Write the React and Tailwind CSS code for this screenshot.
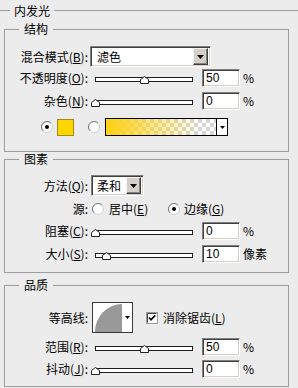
import React from "react";

function Tri() {
  return (
    <svg width="7" height="4" viewBox="0 0 7 4" className="shrink-0">
      <polygon points="0,0 7,0 3.5,4" fill="#000" />
    </svg>
  );
}

function Radio({ checked }) {
  return (
    <svg width="12" height="12" viewBox="0 0 12 12" className="shrink-0">
      <circle cx="6" cy="6" r="5.5" fill="#fff" stroke="#cfcfcf" />
      <path d="M2.1 9.9A5.5 5.5 0 0 1 9.9 2.1" fill="none" stroke="#7a7a7a" />
      {checked && <circle cx="6" cy="6" r="2" fill="#000" />}
    </svg>
  );
}

function Check() {
  return (
    <svg width="12" height="12" viewBox="0 0 12 12" className="shrink-0">
      <rect x="0.5" y="0.5" width="11" height="11" fill="#fff" stroke="#9a9a9a" />
      <path d="M1.5 10.5V1.5H10.5" fill="none" stroke="#404040" />
      <path d="M3 5.5L5 7.8L9.2 3.4" fill="none" stroke="#000" strokeWidth="1.7" />
    </svg>
  );
}

function U({ children }) {
  return <span className="underline underline-offset-[1px]">{children}</span>;
}

function Label({ children }) {
  return (
    <div className="w-[83px] shrink-0 whitespace-nowrap text-right leading-[12px]">
      {children}
    </div>
  );
}

function Slider({ pos }) {
  return (
    <div className="relative ml-[2px] h-[18px] w-[108px] shrink-0">
      <div className="ml-[5px] mt-[8px] h-[5px] w-[98px] border border-[#1e1e1e] bg-white" />
      <svg
        className="absolute top-[7px]"
        style={{ left: 1 + pos }}
        width="9"
        height="8"
        viewBox="0 0 9 8"
      >
        <polygon points="0.5,7.5 0.5,3.5 4.5,0.5 8.5,3.5 8.5,7.5" fill="#fff" stroke="#222" />
      </svg>
    </div>
  );
}

function NumInput({ value }) {
  return (
    <div className="ml-[4px] h-[18px] w-[38px] shrink-0 border border-t-[#808080] border-l-[#808080] border-b-white border-r-white bg-white pl-[3px] font-['Liberation_Sans',sans-serif] text-[12px] leading-[16px] shadow-[inset_1px_1px_0_#404040,inset_-1px_-1px_0_#d4d0c8]">
      {value}
    </div>
  );
}

function DropBtn() {
  return (
    <div className="flex h-[17px] w-[15px] shrink-0 items-center justify-center border border-t-[#f4f4f4] border-l-[#f4f4f4] border-b-[#404040] border-r-[#404040] bg-[#d4d0c8] shadow-[inset_-1px_-1px_0_#808080]">
      <Tri />
    </div>
  );
}

function SliderRow({ label, pos, value, unit, className }) {
  return (
    <div className={`flex h-[18px] items-center ${className}`}>
      <Label>{label}</Label>
      <Slider pos={pos} />
      <NumInput value={value} />
      <span className="ml-[3px] whitespace-nowrap leading-[12px]">{unit}</span>
    </div>
  );
}

function GroupBox({ title, className, children }) {
  return (
    <div className={`relative ml-[4px] flex w-[285px] flex-col border border-[#9d9d9d] ${className}`}>
      <span className="absolute left-[14px] top-[-7px] bg-[#ececec] px-[5px] leading-[12px]">
        {title}
      </span>
      {children}
    </div>
  );
}

export default function App() {
  return (
    <div className="h-[388px] w-[298px] overflow-hidden bg-[#ececec] font-['Noto_Sans_CJK_SC','Noto_Sans',sans-serif] text-[12px] text-black">
      <div className="flex h-[21px] items-center">
        <div className="h-px w-[10px] bg-[#9d9d9d]" />
        <span className="px-[4px] leading-[12px]">内发光</span>
        <div className="h-px flex-1 bg-[#9d9d9d]" />
      </div>

      <GroupBox title="结构" className="mt-[8px] h-[123px]">
        <div className="mt-[16px] flex h-[21px] items-center">
          <Label>
            混合模式(<U>B</U>):
          </Label>
          <div className="ml-[2px] flex h-[21px] w-[121px] items-center border border-t-[#808080] border-l-[#808080] border-b-white border-r-white bg-white p-[1px] pr-[2px] shadow-[inset_1px_1px_0_#404040,inset_-1px_-1px_0_#d4d0c8]">
            <span className="flex-1 pl-[5px] leading-[12px]">滤色</span>
            <DropBtn />
          </div>
        </div>
        <SliderRow
          className="mt-[2px]"
          label={<>不透明度(<U>O</U>):</>}
          pos={49}
          value="50"
          unit="%"
        />
        <SliderRow
          className="mt-[5px]"
          label={<>杂色(<U>N</U>):</>}
          pos={0}
          value="0"
          unit="%"
        />
        <div className="ml-[36px] mt-[8px] flex h-[18px] items-center">
          <Radio checked />
          <div className="ml-[4px] h-[17px] w-[17px] border border-[#a08a1c] bg-[#ffd500]" />
          <div className="ml-[14px]">
            <Radio />
          </div>
          <div className="ml-[5px] flex h-[18px] w-[123px] border border-black bg-white">
            <div className="h-full flex-1 bg-[image:repeating-conic-gradient(#d6d6d6_0%_25%,#ffffff_0%_50%)] bg-[length:8px_8px]">
              <div className="h-full w-full bg-linear-to-r from-[#ffd21a] from-5% to-[#ffd21a00] to-85%" />
            </div>
            <div className="flex w-[11px] items-center justify-center border-l border-black">
              <svg width="5" height="3" viewBox="0 0 5 3">
                <polygon points="0,0 5,0 2.5,3" fill="#000" />
              </svg>
            </div>
          </div>
        </div>
      </GroupBox>

      <GroupBox title="图素" className="mt-[7px] h-[114px]">
        <div className="mt-[15px] flex h-[21px] items-center">
          <Label>
            方法(<U>Q</U>):
          </Label>
          <div className="ml-[3px] flex h-[21px] w-[53px] items-center border border-t-[#808080] border-l-[#808080] border-b-white border-r-white bg-white p-[1px] pr-[2px] shadow-[inset_1px_1px_0_#404040,inset_-1px_-1px_0_#d4d0c8]">
            <span className="flex-1 pl-[4px] leading-[12px]">柔和</span>
            <DropBtn />
          </div>
        </div>
        <div className="mt-[4px] flex h-[18px] items-center">
          <Label>源:</Label>
          <div className="ml-[4px] flex w-[76px] items-center">
            <Radio />
            <span className="ml-[5px] whitespace-nowrap leading-[12px]">
              居中(<U>E</U>)
            </span>
          </div>
          <Radio checked />
          <span className="ml-[4px] whitespace-nowrap leading-[12px]">
            边缘(<U>G</U>)
          </span>
        </div>
        <SliderRow
          className="mt-[4px]"
          label={<>阻塞(<U>C</U>):</>}
          pos={0}
          value="0"
          unit="%"
        />
        <SliderRow
          className="mt-[5px]"
          label={<>大小(<U>S</U>):</>}
          pos={11}
          value="10"
          unit="像素"
        />
      </GroupBox>

      <GroupBox title="品质" className="mt-[12px] h-[102px]">
        <div className="mt-[16px] flex h-[31px] items-center">
          <Label>等高线:</Label>
          <div className="ml-[4px] shrink-0">
            <svg width="41" height="31" viewBox="0 0 41 31">
              <rect x="0.5" y="0.5" width="40" height="30" fill="#fff" stroke="#3a3a3a" />
              <path d="M3 30A27 28 0 0 1 30 2L30 30Z" fill="#999" />
              <polygon points="33,14 38,14 35.5,17" fill="#000" />
            </svg>
          </div>
          <div className="ml-[13px]">
            <Check />
          </div>
          <span className="ml-[5px] whitespace-nowrap leading-[12px]">
            消除锯齿(<U>L</U>)
          </span>
        </div>
        <SliderRow
          className="mt-[5px]"
          label={<>范围(<U>R</U>):</>}
          pos={49}
          value="50"
          unit="%"
        />
        <SliderRow
          className="mt-[4px]"
          label={<>抖动(<U>J</U>):</>}
          pos={0}
          value="0"
          unit="%"
        />
      </GroupBox>
    </div>
  );
}
